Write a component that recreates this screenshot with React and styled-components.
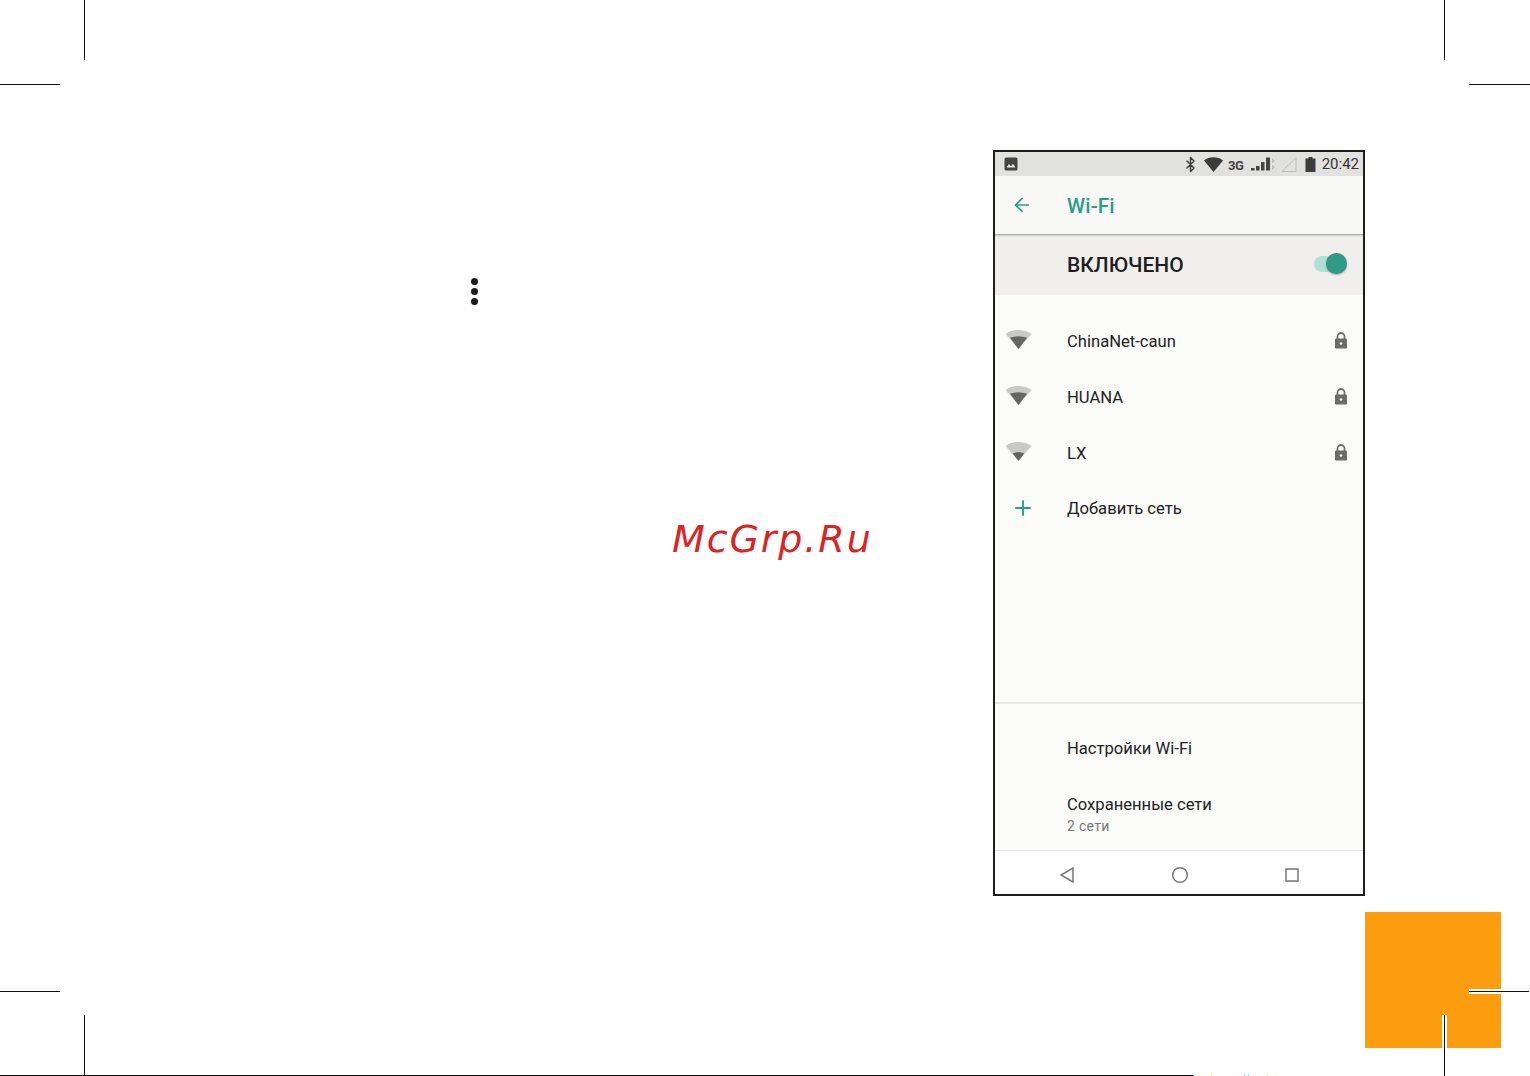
import React from "react";
import styled, { createGlobalStyle } from "styled-components";
import { ArrowLeft, Plus, Bluetooth } from "lucide-react";

const GlobalStyle = createGlobalStyle`
  html, body {
    margin: 0;
    padding: 0;
    background: #fff;
  }
  body {
    font-family: Roboto, "Liberation Sans", sans-serif;
  }
`;

const Page = styled.div`
  position: relative;
  width: 1530px;
  height: 1076px;
  overflow: hidden;
  box-sizing: border-box;
  padding: 150px 0 0 993px;
  background: #fff;
`;

/* print crop marks lie on the sheet, so they sit at their own coordinates */
const Mark = styled.div`
  position: absolute;
  background: #111;
  z-index: 2;
`;

const HMark = styled(Mark)`
  left: ${({ $x }) => $x}px;
  top: ${({ $y }) => $y}px;
  width: ${({ $len }) => $len}px;
  height: 1px;
`;

const VMark = styled(Mark)`
  left: ${({ $x }) => $x}px;
  top: ${({ $y }) => $y}px;
  width: 1px;
  height: ${({ $len }) => $len}px;
`;

const Speck = styled(Mark)`
  left: ${({ $x }) => $x}px;
  top: 1075px;
  width: 1px;
  height: 1px;
  background: ${({ $color }) => $color};
`;

const Tab = styled.div`
  position: absolute;
  left: 1365px;
  top: 912px;
  width: 136px;
  height: 136px;
  background: #fb9d0e;
`;

const TabNotchH = styled.div`
  position: absolute;
  left: 1469px;
  top: 989px;
  width: 32px;
  height: 5px;
  background: #fff;
  z-index: 1;
`;

const TabNotchV = styled.div`
  position: absolute;
  left: 1442px;
  top: 1015px;
  width: 5px;
  height: 33px;
  background: #fff;
  z-index: 1;
`;

const MenuDots = styled.div`
  position: absolute;
  left: 471px;
  top: 278px;
  display: flex;
  flex-direction: column;
  gap: 3px;
`;

const Dot = styled.span`
  width: 7px;
  height: 7px;
  border-radius: 50%;
  background: #1c1c1c;
`;

const Watermark = styled.div`
  position: absolute;
  left: 672px;
  top: 517px;
  font-family: "DejaVu Sans", sans-serif;
  font-style: oblique;
  font-size: 38px;
  line-height: 44px;
  letter-spacing: 1.9px;
  color: #db2424;
  white-space: nowrap;
`;

const Phone = styled.div`
  width: 372px;
  height: 746px;
  box-sizing: border-box;
  border: 2px solid #1d1d1b;
  display: flex;
  flex-direction: column;
  background: #fbfbf9;
`;

const StatusBar = styled.div`
  height: 24px;
  flex: none;
  display: flex;
  align-items: center;
  padding: 0 4px 0 9px;
  background: #e1e1df;
  color: #3c3c3c;
`;

const StatusIcons = styled.div`
  margin-left: auto;
  display: flex;
  align-items: center;
`;

const NetLabel = styled.span`
  font-size: 13px;
  font-weight: 700;
  margin: 3px 7px 0 4px;
  letter-spacing: -0.3px;
  color: #444;
`;

const Clock = styled.span`
  font-size: 15px;
  font-weight: 400;
  margin-left: 6px;
  color: #333;
`;

const AppBar = styled.div`
  height: 58px;
  flex: none;
  display: flex;
  align-items: center;
  background: #f8f8f6;
  color: #2a9d86;
`;

const IconSlot = styled.div`
  width: 72px;
  flex: none;
  padding-left: ${({ $pad }) => $pad ?? 16}px;
  box-sizing: border-box;
  display: flex;
  align-items: center;
  color: #2a9d86;
`;

const Title = styled.h1`
  margin: 2px 0 0;
  font-size: 20.5px;
  font-weight: 500;
  letter-spacing: 0.2px;
  color: #2a9d86;
`;

const SwitchBar = styled.div`
  height: 61px;
  flex: none;
  display: flex;
  align-items: center;
  padding: 0 16px 0 72px;
  box-sizing: border-box;
  justify-content: space-between;
  background: #f0efee;
  box-shadow: inset 0 2px 1px -1px #a9a9a7, inset 0 3px 2px -1px #cfcfcd;
`;

const SwitchLabel = styled.div`
  font-size: 21px;
  font-weight: 500;
  color: #1e1e1e;
  margin-top: 1px;
`;

const Toggle = styled.div`
  position: relative;
  width: 33px;
  height: 16px;
  margin-top: -2px;
  border-radius: 8px;
  background: #b2e0d4;
`;

const Thumb = styled.div`
  position: absolute;
  right: 0;
  top: -2.5px;
  width: 21px;
  height: 21px;
  border-radius: 50%;
  background: #2f9a85;
  box-shadow: 0 1px 2px rgba(0, 0, 0, 0.3);
`;

const Networks = styled.div`
  flex: 1;
  padding-top: 18px;
  display: flex;
  flex-direction: column;
`;

const Row = styled.div`
  height: 55.7px;
  flex: none;
  display: flex;
  align-items: center;
  padding-right: 15px;
`;

const RowText = styled.div`
  flex: 1;
  font-size: 16.6px;
  line-height: 20px;
  margin-top: 3px;
  color: #222;
`;

const Settings = styled.div`
  height: 148px;
  flex: none;
  box-sizing: border-box;
  border-top: 2px solid #e8e8e6;
  padding: 35px 0 0 72px;
  display: flex;
  flex-direction: column;
  gap: 36px;
`;

const SettingsItem = styled.div`
  flex: none;
`;

const ItemTitle = styled.div`
  font-size: 16.6px;
  line-height: 20px;
  color: #222;
`;

const ItemSub = styled.div`
  font-size: 14px;
  line-height: 16px;
  color: #777;
  margin-top: 3px;
  letter-spacing: 0.3px;
`;

const NavBar = styled.div`
  height: 44px;
  flex: none;
  box-sizing: border-box;
  border-top: 1px solid #e2e2e0;
  background: #fff;
  display: flex;
  align-items: center;
  justify-content: space-between;
  padding: 5px 63px 0 64px;
`;

const Image = () => (
  <svg width="14" height="14" viewBox="0 0 14 14">
    <rect x="0.5" y="0.5" width="13" height="13" rx="1.5" fill="#444" />
    <path d="M2.5 10.5 5 7l2 2.3L9 6.8l2.5 3.7z" fill="#e1e1df" />
  </svg>
);

const WifiFull = () => (
  <svg width="20" height="15" viewBox="0 0 20 15" style={{ marginLeft: 5 }}>
    <path d="M0 3.5C5-0.8 14-0.8 19 3.5L9.5 15z" fill="#3c3c3c" />
  </svg>
);

const Signal = () => (
  <svg width="19" height="14" viewBox="0 0 19 14">
    <g fill="#444">
      <rect x="0" y="11" width="3.500" height="2.500" />
      <rect x="5" y="9" width="3.500" height="4.500" />
      <rect x="10" y="5" width="3.500" height="8.500" />
      <rect x="15" y="0.500" width="4" height="13" />
    </g>
  </svg>
);

const DataArrows = () => (
  <svg width="6" height="14" viewBox="0 0 6 14" style={{ marginLeft: 1 }}>
    <path d="M1 1l3 3-3 2zM1 8l3 2-3 3z" fill="#bdbdbb" />
  </svg>
);

const EmptySignal = () => (
  <svg width="16" height="16" viewBox="0 0 16 16" style={{ marginLeft: 4 }}>
    <path d="M1 15.5L15 1.5v14z" fill="none" stroke="#bdbdbb" strokeWidth="1" />
  </svg>
);

const Battery = () => (
  <svg width="11" height="15" viewBox="0 0 11 15" style={{ marginLeft: 8 }}>
    <path d="M3.5 0h4v1.5H10.500V15H0.500V1.500h3z" fill="#3c3c3c" />
  </svg>
);

const Lock = () => (
  <svg width="14" height="17" viewBox="0 0 14 17">
    <path
      d="M3.500 7V4.500a3.500 3.500 0 0 1 7 0V7"
      fill="none"
      stroke="#6b6b6b"
      strokeWidth="1.800"
    />
    <rect x="1" y="6.500" width="12" height="10" rx="1.200" fill="#6b6b6b" />
    <circle cx="7" cy="11.500" r="1.300" fill="#fbfbf9" />
  </svg>
);

// level = how far the dark part of the wedge reaches up, 0..1
const WifiSignal = ({ level }) => {
  const top = 18 * (1 - level);
  const half = (18 - top) * 0.76;
  return (
    <svg
      width="28"
      height="20"
      viewBox="0 0 28 20"
      style={{ marginLeft: 10, marginTop: -3 }}
    >
      <path d="M0.500 5C7 -0.500 19-0.500 26.500 5L13.500 20z" fill="#c9c9c7" />
      <path
        d={`M${13.5 - half} ${top + 2}Q13.500 ${top - 1} ${13.5 + half} ${top + 2}L13.500 20z`}
        fill="#646464"
      />
    </svg>
  );
};

const networks = [
  { name: "ChinaNet-caun", level: 0.62 },
  { name: "HUANA", level: 0.62 },
  { name: "LX", level: 0.42 },
];

const App = () => {
  return (
    <Page>
      <GlobalStyle />

      <HMark $x={0} $y={84} $len={60} />
      <VMark $x={84} $y={0} $len={60} />
      <HMark $x={1469} $y={84} $len={61} />
      <VMark $x={1444} $y={0} $len={60} />
      <HMark $x={0} $y={991} $len={60} />
      <VMark $x={84} $y={1015} $len={61} />
      <HMark $x={1469} $y={991} $len={60} />
      <VMark $x={1444} $y={1015} $len={61} />
      <HMark $x={0} $y={1075} $len={1193} />
      <Speck $x={1193} $color="#27c4d8" />
      <Speck $x={1211} $color="#e8d820" />
      <Speck $x={1244} $color="#27c4d8" />
      <Speck $x={1248} $color="#27c4d8" />
      <Speck $x={1267} $color="#e8d820" />

      <Tab />
      <TabNotchH />
      <TabNotchV />

      <MenuDots>
        <Dot />
        <Dot />
        <Dot />
      </MenuDots>

      <Watermark>McGrp.Ru</Watermark>

      <Phone>
        <StatusBar>
          <Image />
          <StatusIcons>
            <Bluetooth size={17} strokeWidth={2} color="#3c3c3c" />
            <WifiFull />
            <NetLabel>3G</NetLabel>
            <Signal />
            <DataArrows />
            <EmptySignal />
            <Battery />
            <Clock>20:42</Clock>
          </StatusIcons>
        </StatusBar>

        <AppBar>
          <IconSlot>
            <ArrowLeft size={22} strokeWidth={1.9} />
          </IconSlot>
          <Title>Wi-Fi</Title>
        </AppBar>

        <SwitchBar>
          <SwitchLabel>ВКЛЮЧЕНО</SwitchLabel>
          <Toggle>
            <Thumb />
          </Toggle>
        </SwitchBar>

        <Networks>
          {networks.map((n) => (
            <Row key={n.name}>
              <IconSlot $pad={0}>
                <WifiSignal level={n.level} />
              </IconSlot>
              <RowText>{n.name}</RowText>
              <Lock />
            </Row>
          ))}
          <Row>
            <IconSlot $pad={16}>
              <Plus size={24} strokeWidth={1.9} />
            </IconSlot>
            <RowText>Добавить сеть</RowText>
          </Row>
        </Networks>

        <Settings>
          <SettingsItem>
            <ItemTitle>Настройки Wi-Fi</ItemTitle>
          </SettingsItem>
          <SettingsItem>
            <ItemTitle>Сохраненные сети</ItemTitle>
            <ItemSub>2 сети</ItemSub>
          </SettingsItem>
        </Settings>

        <NavBar>
          <svg width="16" height="18" viewBox="0 0 16 18">
            <path d="M14 2v14L2 9z" fill="none" stroke="#777" strokeWidth="1.500" />
          </svg>
          <svg width="18" height="18" viewBox="0 0 18 18">
            <circle cx="9" cy="9" r="7.300" fill="none" stroke="#777" strokeWidth="1.500" />
          </svg>
          <svg width="16" height="16" viewBox="0 0 16 16">
            <rect x="2" y="2" width="12" height="12" fill="none" stroke="#777" strokeWidth="1.500" />
          </svg>
        </NavBar>
      </Phone>
    </Page>
  );
};

export default App;
